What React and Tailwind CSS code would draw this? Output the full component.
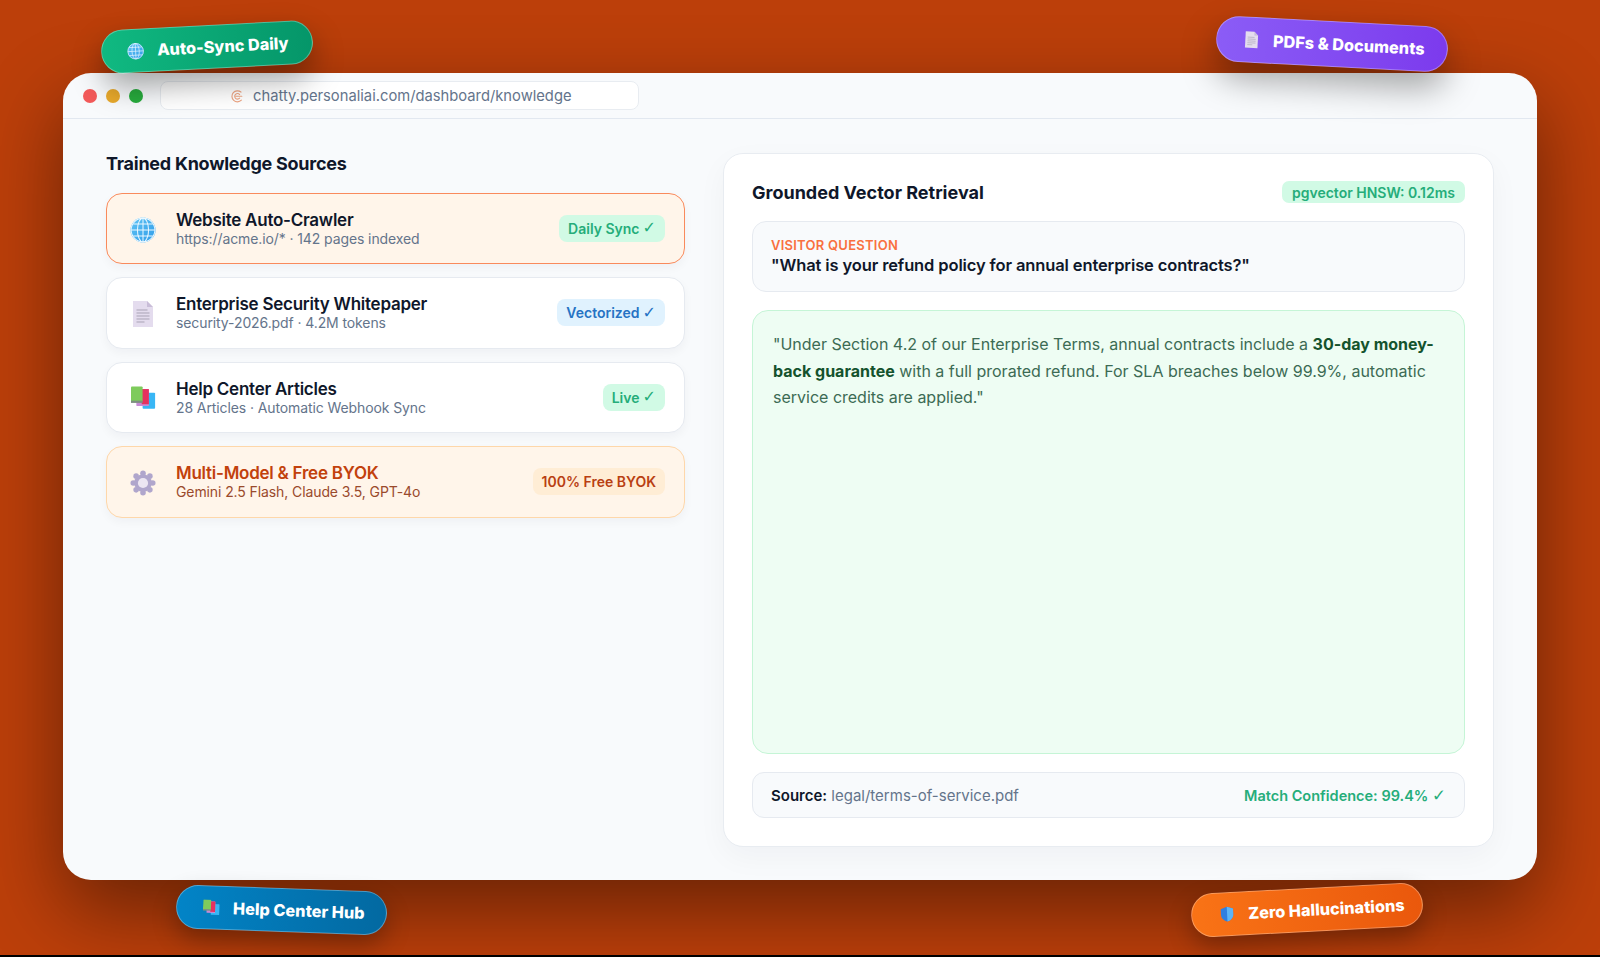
const GlobeIcon = ({ className }) => (
  <svg viewBox="0 0 28 28" className={className} fill="none">
    <defs>
      <linearGradient id="globeFill" x1="0" y1="0" x2="1" y2="1">
        <stop offset="0" stopColor="#60c4f4" />
        <stop offset="1" stopColor="#2f9be8" />
      </linearGradient>
    </defs>
    <circle cx="14" cy="14" r="13.500" fill="url(#globeFill)" />
    <g stroke="#eaf7ff" strokeWidth="1.100">
      <circle cx="14" cy="14" r="12.800" />
      <ellipse cx="14" cy="14" rx="6" ry="12.800" />
      <path d="M14 1.200v25.600M1.200 14h25.600M3.500 7.500h21M3.500 20.500h21" />
    </g>
  </svg>
);

const DocIcon = ({ className }) => (
  <svg viewBox="0 0 24 28" className={className}>
    <path d="M2 1h14l6 6v20H2z" fill="#e4dcee" />
    <path d="M16 1l6 6h-6z" fill="#c9bdd8" />
    <path d="M5.500 10h11M5.500 13h13M5.500 16h13M5.500 19h13M5.500 22h8" stroke="#a9a3b5" strokeWidth="1" />
  </svg>
);

const BooksIcon = ({ className }) => (
  <svg viewBox="0 0 28 26" className={className}>
    <rect x="13" y="7" width="14" height="18" rx="1" fill="#38b6f5" />
    <rect x="6" y="3" width="14" height="19" rx="1" fill="#c78bd6" />
    <rect x="12" y="3" width="8" height="17" fill="#e5325f" />
    <rect x="0" y="0" width="13" height="17" rx="1" fill="#7ecb5c" />
    <rect x="0" y="16" width="13" height="2.500" fill="#7d8f80" />
  </svg>
);

const GearIcon = ({ className }) => (
  <svg viewBox="0 0 28 28" className={className}>
    <g fill="#b0a6cc">
      <circle cx="14" cy="3.500" r="3" />
      <circle cx="14" cy="24.500" r="3" />
      <circle cx="3.500" cy="14" r="3" />
      <circle cx="24.500" cy="14" r="3" />
      <circle cx="6.600" cy="6.600" r="3" />
      <circle cx="21.400" cy="6.600" r="3" />
      <circle cx="6.600" cy="21.400" r="3" />
      <circle cx="21.400" cy="21.400" r="3" />
      <circle cx="14" cy="14" r="9.500" />
    </g>
    <circle cx="14" cy="14" r="5.500" fill="#ece6f2" />
  </svg>
);

const ShieldIcon = ({ className }) => (
  <svg viewBox="0 0 16 18" className={className}>
    <path d="M8 0.500 15 3v6.500c0 4-3.200 6.800-7 8-3.800-1.200-7-4-7-8V3z" fill="#2f7fe0" />
    <path d="M8 0.500 15 3v6.500c0 4-3.200 6.800-7 8z" fill="#5cb4f5" />
  </svg>
);

const ChattyLogo = ({ className }) => (
  <svg viewBox="0 0 16 16" className={className} fill="none" stroke="#eea684" strokeWidth="1.300" strokeLinecap="round">
    <path d="M12.500 3.500A6.300 6.300 0 1 0 13 12.800" />
    <path d="M11 6.300A3.200 3.200 0 1 0 11 10.500" />
    <path d="M6.500 8.300h7" />
  </svg>
);

const Tick = () => <span className="font-['DejaVu_Sans',sans-serif] font-normal text-[1.150em] leading-none">✓</span>;

const sources = [
  {
    icon: <GlobeIcon className="w-[26px] h-[26px] mt-[3px]" />,
    title: 'Website Auto-Crawler',
    sub: 'https://acme.io/* · 142 pages indexed',
    badge: 'Daily Sync',
    tick: true,
    card: 'bg-[#fff5ea] border-[#f98a5c]',
    titleColor: 'text-[#0f172a]',
    subColor: 'text-[#64748b]',
    badgeColor: 'bg-[#d1fae5] text-[#25ad7a]',
  },
  {
    icon: <DocIcon className="w-[24px] h-[28px] mt-[2px]" />,
    title: 'Enterprise Security Whitepaper',
    sub: 'security-2026.pdf · 4.2M tokens',
    badge: 'Vectorized',
    tick: true,
    card: 'bg-white border-[#e6eaf0]',
    titleColor: 'text-[#0f172a]',
    subColor: 'text-[#64748b]',
    badgeColor: 'bg-[#e0f2fe] text-[#2673c4]',
  },
  {
    icon: <BooksIcon className="w-[25px] h-[24px] mt-[2px]" />,
    title: 'Help Center Articles',
    sub: '28 Articles · Automatic Webhook Sync',
    badge: 'Live',
    tick: true,
    card: 'bg-white border-[#e6eaf0]',
    titleColor: 'text-[#0f172a]',
    subColor: 'text-[#64748b]',
    badgeColor: 'bg-[#d1fae5] text-[#25ad7a]',
  },
  {
    icon: <GearIcon className="w-[26px] h-[26px] mt-[2px]" />,
    title: 'Multi-Model & Free BYOK',
    sub: 'Gemini 2.5 Flash, Claude 3.5, GPT-4o',
    badge: '100% Free BYOK',
    card: 'bg-[#fff5ea] border-[#fed7aa]',
    titleColor: 'text-[#c2410c]',
    subColor: 'text-[#9a4a2c]',
    badgeColor: 'bg-[#ffedd5] text-[#b93f12]',
  },
];

function SourceCard({ item }) {
  return (
    <div className={`h-[71.500px] rounded-[16px] border-[1.5px] pl-[22px] pr-[19px] flex items-center shadow-[0_4px_10px_rgba(15,23,42,0.04)] ${item.card}`}>
      <div className="w-[28px] flex justify-center shrink-0">{item.icon}</div>
      <div className="ml-[19px] flex-1 min-w-0">
        <div className={`text-[17px] leading-[20px] font-semibold tracking-[-0.25px] ${item.titleColor}`}>{item.title}</div>
        <div className={`text-[14px] leading-[17px] tracking-[-0.1px] ${item.subColor}`}>{item.sub}</div>
      </div>
      <span className={`h-[27px] px-[9px] rounded-[8px] flex items-center gap-[3px] text-[14px] font-semibold whitespace-nowrap ${item.badgeColor}`}>
        {item.badge}
        {item.tick && <Tick />}
      </span>
    </div>
  );
}

export default function App() {
  return (
    <div className="relative w-full h-[957px] overflow-hidden bg-black font-['Inter',sans-serif]">
      <div className="h-[955px] px-[63px] pt-[73px] bg-[#bc3f0a]">
        <div className="h-[807px] rounded-[28px] bg-[#f8fafc] shadow-[0_30px_80px_rgba(0,0,0,0.45)] flex flex-col overflow-hidden">
          <div className="h-[46px] shrink-0 border-b border-[#e2e8f0] pl-[20px] flex items-center">
            <div className="flex gap-[9px]">
              <span className="w-[14px] h-[14px] rounded-full bg-[#f35a5a]" />
              <span className="w-[14px] h-[14px] rounded-full bg-[#e8a92c]" />
              <span className="w-[14px] h-[14px] rounded-full bg-[#28ad3e]" />
            </div>
            <div className="ml-[17px] w-[479px] h-[29px] rounded-[8px] bg-white border border-[#e8ecf1] pl-[69px] flex items-center gap-[9px]">
              <ChattyLogo className="w-[14px] h-[14px]" />
              <span className="mt-[2px] text-[14.750px] text-[#64748b]">chatty.personaliai.com/dashboard/knowledge</span>
            </div>
          </div>

          <div className="flex-1 pl-[43px] pr-[42px] pt-[34px] flex gap-[38px]">
            <div className="w-[579px] shrink-0">
              <h2 className="text-[18px] leading-[22px] font-bold tracking-[-0.25px] text-[#0f172a] mb-[17.500px]">Trained Knowledge Sources</h2>
              <div className="flex flex-col gap-[13px]">
                {sources.map((s) => <SourceCard key={s.title} item={s} />)}
              </div>
            </div>

            <div className="w-[771px] h-[694px] shrink-0 rounded-[20px] bg-white border border-[#e8ecf1] shadow-[0_10px_30px_rgba(15,23,42,0.04)] px-[28px] pt-[27px] flex flex-col">
              <div className="h-[22px] flex items-center justify-between">
                <h3 className="text-[18px] font-bold text-[#0f172a]">Grounded Vector Retrieval</h3>
                <span className="h-[22px] px-[10px] rounded-[7px] bg-[#d1fae5] text-[#25ad7a] text-[14px] font-semibold flex items-center">pgvector HNSW: 0.12ms</span>
              </div>
              <div className="mt-[18px] h-[71px] rounded-[14px] bg-[#f8fafc] border border-[#e6eaf0] px-[18px] pt-[15px]">
                <div className="text-[13px] leading-[16px] font-semibold tracking-[0.25px] text-[#f97040]">VISITOR QUESTION</div>
                <div className="mt-[2px] text-[16.500px] leading-[21px] font-semibold tracking-[-0.12px] text-[#0f172a]">"What is your refund policy for annual enterprise contracts?"</div>
              </div>
              <div className="mt-[18px] h-[444px] rounded-[16px] bg-[#eefdf3] border border-[#c5f5d6] px-[20px] pt-[20px] text-[16px] leading-[26.500px] text-[#3c6b54]">
                "Under Section 4.2 of our Enterprise Terms, annual contracts include a <strong className="font-bold text-[#14532d]">30-day money-back guarantee</strong> with a full prorated refund. For SLA breaches below 99.9%, automatic service credits are applied."
              </div>
              <div className="mt-[18px] h-[46px] rounded-[12px] bg-[#f8fafc] border border-[#e6eaf0] px-[18px] pt-[2px] flex items-center justify-between text-[15px]">
                <div className="text-[#64748b]"><span className="font-semibold text-[#0f172a]">Source:</span> legal/terms-of-service.pdf</div>
                <div className="text-[14.500px] font-semibold text-[#25ad7a]">Match Confidence: 99.4% <Tick /></div>
              </div>
            </div>
          </div>
        </div>
      </div>

      <div className="absolute left-[101px] top-[25px] w-[212px] h-[44px] rotate-[-3deg] rounded-full border border-white/30 bg-gradient-to-r from-[#10b981] to-[#059669] shadow-[0_14px_30px_rgba(0,0,0,0.35)] flex items-center pl-[25px] gap-[13px] text-white text-[16.250px] font-extrabold">
        <GlobeIcon className="w-[17px] h-[17px]" />
        <span className="pt-[1px]">Auto-Sync Daily</span>
      </div>
      <div className="absolute left-[1216px] top-[21px] w-[232px] h-[46px] rotate-[3deg] rounded-full border border-white/30 bg-gradient-to-r from-[#8b5cf6] to-[#7c3aed] shadow-[0_16px_34px_rgba(0,0,0,0.35)] flex items-center pl-[27px] gap-[14px] text-white text-[16.250px] font-extrabold">
        <DocIcon className="w-[15px] h-[18px]" />
        <span className="pt-[1px]">PDFs & Documents</span>
      </div>
      <div className="absolute left-[176px] top-[888px] w-[211px] h-[44px] rotate-[2deg] rounded-full border border-white/30 bg-gradient-to-r from-[#0284c7] to-[#0369a1] shadow-[0_10px_24px_rgba(0,0,0,0.3)] flex items-center pl-[26px] gap-[13px] text-white text-[16.250px] font-extrabold">
        <BooksIcon className="w-[17px] h-[16px]" />
        <span className="pt-[1px]">Help Center Hub</span>
      </div>
      <div className="absolute left-[1191px] top-[888px] w-[232px] h-[44px] rotate-[-3deg] rounded-full border border-white/30 bg-gradient-to-r from-[#f97316] to-[#ea580c] shadow-[0_10px_24px_rgba(0,0,0,0.3)] flex items-center pl-[28px] gap-[14px] text-white text-[16.250px] font-extrabold">
        <ShieldIcon className="w-[14px] h-[16px]" />
        <span className="pt-[1px]">Zero Hallucinations</span>
      </div>
    </div>
  );
}
